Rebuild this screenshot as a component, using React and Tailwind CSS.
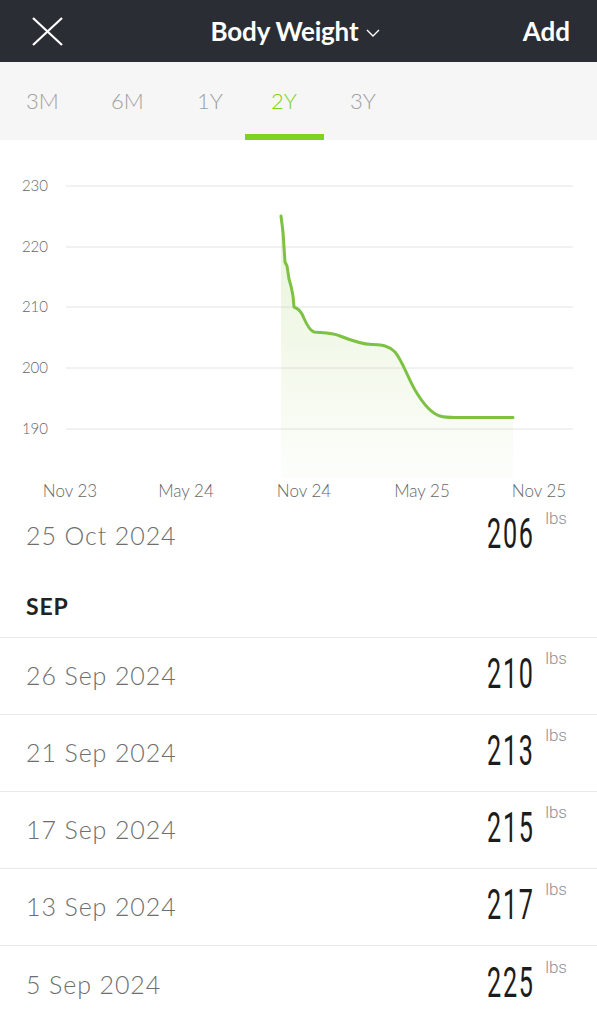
import React from 'react';

const tabs = [
  { label: '3M', width: 'w-[85px]' },
  { label: '6M', width: 'w-[86px]' },
  { label: '1Y', width: 'w-[74px]' },
  { label: '2Y', width: 'w-[79px]' },
  { label: '3Y', width: 'w-[78px]' },
];

const entries = [
  { date: '26 Sep 2024', value: 210 },
  { date: '21 Sep 2024', value: 213 },
  { date: '17 Sep 2024', value: 215 },
  { date: '13 Sep 2024', value: 217 },
  { date: '5 Sep 2024', value: 225 },
];

const gridLines = [
  { label: '230', y: 186 },
  { label: '220', y: 247 },
  { label: '210', y: 307 },
  { label: '200', y: 368 },
  { label: '190', y: 429 },
];

const xLabels = [
  { label: 'Nov 23', x: 70 },
  { label: 'May 24', x: 186 },
  { label: 'Nov 24', x: 304 },
  { label: 'May 25', x: 422 },
  { label: 'Nov 25', x: 539 },
];

const linePath =
  'M281,216 L283,232 L285,262 L287,266 L289,279 L291,286 L292,291 L293,296 L294,307 ' +
  'C297,308 299,309 302,314 C305,320 308,330 314,332 C320,333 330,332 340,336 ' +
  'C350,340 360,344 372,344.5 C382,345 388,345 395,352 C402,360 408,378 415,390 ' +
  'C422,402 430,413 440,416 C445,417.5 450,417.5 455,417.5 L513,417.5';

const WeightChart = () => (
  <svg width="597" height="372" viewBox="0 140 597 372" className="block">
    <defs>
      <linearGradient id="fillGrad" x1="0" y1="0" x2="0" y2="1">
        <stop offset="0%" stopColor="#8cc63f" stopOpacity="0.2" />
        <stop offset="100%" stopColor="#8cc63f" stopOpacity="0.02" />
      </linearGradient>
    </defs>
    {gridLines.map((g) => (
      <g key={g.label}>
        <line x1="66" x2="573" y1={g.y} y2={g.y} stroke="#e4e4e4" strokeWidth="1" />
        <text
          x="48"
          y={g.y + 5}
          textAnchor="end"
          fontSize="15"
          fontWeight="300"
          fill="#666"
          fontFamily="Lato, sans-serif"
        >
          {g.label}
        </text>
      </g>
    ))}
    <path d={`${linePath} L513,478 L281,478 Z`} fill="url(#fillGrad)" />
    <path d={linePath} fill="none" stroke="#7dc242" strokeWidth="3" strokeLinejoin="round" strokeLinecap="round" />
    {xLabels.map((l) => (
      <text
        key={l.label}
        x={l.x}
        y="497"
        textAnchor="middle"
        fontSize="17"
        fontWeight="300"
        fill="#666"
        fontFamily="Lato, sans-serif"
      >
        {l.label}
      </text>
    ))}
  </svg>
);

const EntryRow = ({ date, value, border = true }) => (
  <div
    className={`flex h-[77px] items-center justify-between pl-[26px] pr-[30px] ${
      border ? 'border-b border-[#e9e9e9]' : ''
    }`}
  >
    <span className="text-[25px] font-light tracking-[0.9px] text-[#6e6e6e]">{date}</span>
    <div className="flex items-start pb-[4px]">
      <span className="inline-block origin-right scale-x-[0.6] font-['Roboto',sans-serif] text-[42px] font-normal leading-none tracking-[3px] text-[#1c1c1c]">
        {value}
      </span>
      <span className="ml-[10px] mt-[-3px] font-['Roboto',sans-serif] text-[17px] font-light leading-none text-[#8f8f8f]">
        lbs
      </span>
    </div>
  </div>
);

export default function App() {
  return (
    <div className="h-[1024px] w-[597px] overflow-hidden bg-white font-['Lato',sans-serif]">
      {/* Top bar */}
      <div className="grid h-[62px] grid-cols-[1fr_auto_1fr] items-center bg-[#2a2d34] px-[27px] text-white">
        <div className="flex items-center pl-[5px]">
          <svg width="31" height="29" viewBox="0 0 31 29" fill="none" stroke="white" strokeWidth="2.2">
            <path d="M1 1 L30 28" />
            <path d="M30 1 L1 28" />
          </svg>
        </div>
        <div className="flex items-center gap-[8px] pt-[1px] pr-[6px]">
          <span className="text-[26px] font-bold tracking-[-0.2px]">Body Weight</span>
          <svg width="14" height="8" viewBox="0 0 14 8" fill="none" stroke="white" strokeWidth="1.4" className="mt-[2px]">
            <path d="M1 1 L7 7 L13 1" />
          </svg>
        </div>
        <div className="text-right text-[26px] font-bold">Add</div>
      </div>

      {/* Range tabs */}
      <div className="flex h-[78px] bg-[#f6f6f6]">
        {tabs.map((t) => (
          <div
            key={t.label}
            className={`flex ${t.width} flex-col justify-center pl-[26px] pt-[4px] text-[22px] font-light ${
              t.label === '2Y'
                ? 'border-b-[6px] border-[#7ed321] text-[#7ed321]'
                : 'border-b-[6px] border-transparent text-[#9e9e9e]'
            }`}
          >
            {t.label}
          </div>
        ))}
      </div>

      {/* Chart */}
      <WeightChart />

      {/* Entries list */}
      <div className="overflow-hidden">
        <div className="mt-[-15px]">
          <EntryRow date="25 Oct 2024" value={206} border={false} />
          <div className="flex h-[64px] items-center border-b border-[#e9e9e9] pl-[26px] pt-[2px]">
            <span className="text-[23px] font-bold tracking-[0.8px] text-[#222]">SEP</span>
          </div>
          {entries.map((e, i) => (
            <EntryRow key={e.date} date={e.date} value={e.value} border={i < entries.length - 1} />
          ))}
        </div>
      </div>
    </div>
  );
}
